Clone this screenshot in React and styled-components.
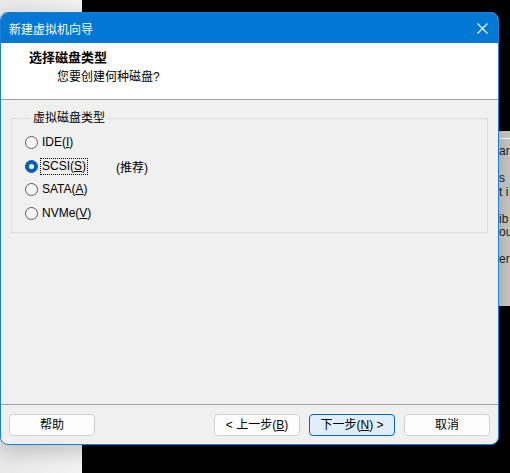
import React from 'react';
import styled, { createGlobalStyle } from 'styled-components';

const GlobalStyle = createGlobalStyle`
  html, body {
    margin: 0;
    padding: 0;
  }
  body {
    font-family: "Liberation Sans", "Noto Sans CJK SC", sans-serif;
    font-size: 12px;
    color: #000;
  }
`;

const cjk = `"Liberation Sans", "Noto Sans CJK SC", sans-serif`;

const Desktop = styled.div`
  position: relative;
  width: 510px;
  height: 473px;
  overflow: hidden;
  box-sizing: border-box;
  padding-top: 12px;
  background: linear-gradient(90deg, #e9e9e9 0, #f4f4f4 82px, #000 82px);
`;

// a bit of another window peeking out from behind the wizard
const BackWindow = styled.div`
  position: absolute;
  left: 499px;
  top: 131px;
  width: 20px;
  height: 175px;
  background: #c9c9c9;
  overflow: hidden;
`;

const BackTitle = styled.div`
  height: 7px;
  border-bottom: 1px solid #fff;
`;

const BackText = styled.pre`
  margin: 0;
  padding-top: 6px;
  font-family: "Liberation Sans", sans-serif;
  font-size: 12px;
  line-height: 13.5px;
  color: #1e1e1e;
  white-space: pre;
`;

const Window = styled.div`
  position: relative;
  width: 499px;
  height: 433px;
  box-sizing: border-box;
  border: 1px solid #1a7fd6;
  border-radius: 8px;
  overflow: hidden;
  display: flex;
  flex-direction: column;
  background: #f0f0f0;
  box-shadow: 0 6px 22px rgba(0, 0, 0, 0.22);
`;

const TitleBar = styled.div`
  height: 30px;
  flex-shrink: 0;
  display: flex;
  align-items: center;
  justify-content: space-between;
  padding: 0 10px 0 8px;
  background: #0078d4;
  color: #fff;
  font-family: ${cjk};
  font-size: 12px;
`;

const CloseButton = styled.span`
  display: flex;
  width: 11px;
  height: 11px;
`;

const Header = styled.div`
  flex-shrink: 0;
  background: #fff;
  border-bottom: 1px solid #a0a0a0;
  padding: 7px 0 0 28px;
  height: 49px;
  font-family: ${cjk};
`;

const Heading = styled.div`
  font-size: 13px;
  font-weight: 700;
  line-height: 16px;
`;

const SubHeading = styled.div`
  margin: 3px 0 0 28px;
  font-size: 12px;
  line-height: 16px;
`;

const Body = styled.div`
  flex: 1;
  padding: 10px 10px 0;
`;

const Group = styled.fieldset`
  margin: 0;
  padding: 5px 13px 7px;
  border: 1px solid #dcdcdc;
  min-inline-size: 0;
`;

const Legend = styled.legend`
  margin-left: 6px;
  padding: 0 2px;
  font-family: ${cjk};
  font-size: 12px;
  line-height: 16px;
`;

const Option = styled.label`
  display: flex;
  align-items: center;
  height: 23.6px;
  font-size: 12px;
`;

const RadioDot = styled.span`
  width: 13px;
  height: 13px;
  box-sizing: border-box;
  border-radius: 50%;
  margin-right: 3px;
  flex-shrink: 0;
  border: 1px solid ${(p) => (p.$checked ? '#005fb8' : '#5c5c5c')};
  background: ${(p) => (p.$checked ? '#005fb8' : '#f7f7f7')};
  display: flex;
  align-items: center;
  justify-content: center;

  &::after {
    content: '';
    display: ${(p) => (p.$checked ? 'block' : 'none')};
    width: 5px;
    height: 5px;
    border-radius: 50%;
    background: #fff;
  }
`;

const OptionText = styled.span`
  padding: 0 1px;
  line-height: 15px;
  outline: ${(p) => (p.$focused ? '1px dotted #000' : 'none')};
`;

const Hint = styled.span`
  margin-left: 29px;
  font-family: ${cjk};
`;

const Footer = styled.div`
  flex-shrink: 0;
  display: flex;
  align-items: center;
  gap: 9px;
  padding: 9px 8px 8px;
  border-top: 1px solid #a0a0a0;
`;

const Spacer = styled.div`
  flex: 1;
`;

const Button = styled.button`
  width: 86px;
  height: 22px;
  padding: 0;
  border-radius: 4px;
  border: 1px solid ${(p) => (p.$primary ? '#0067c0' : '#d0d0d0')};
  background: ${(p) => (p.$primary ? '#e0eef9' : '#fdfdfd')};
  font-family: ${cjk};
  font-size: 12px;
  color: #000;
  line-height: 20px;
`;

const options = [
  { label: 'IDE', key: 'I' },
  { label: 'SCSI', key: 'S', checked: true, hint: '(推荐)' },
  { label: 'SATA', key: 'A' },
  { label: 'NVMe', key: 'V' },
];

export default function App() {
  return (
    <>
      <GlobalStyle />
      <Desktop>
        <BackWindow>
          <BackTitle />
          <BackText>{'are\n\ns\nt i\n\nib\nou\n\ner'}</BackText>
        </BackWindow>

        <Window>
          <TitleBar>
            <span>新建虚拟机向导</span>
            <CloseButton>
              <svg width="11" height="11" viewBox="0 0 11 11">
                <path d="M0.5 0.5 L10.5 10.5 M10.5 0.5 L0.5 10.5" stroke="#fff" strokeWidth="1.1" fill="none" />
              </svg>
            </CloseButton>
          </TitleBar>

          <Header>
            <Heading>选择磁盘类型</Heading>
            <SubHeading>您要创建何种磁盘?</SubHeading>
          </Header>

          <Body>
            <Group>
              <Legend>虚拟磁盘类型</Legend>
              {options.map((o) => (
                <Option key={o.label}>
                  <RadioDot $checked={o.checked} />
                  <OptionText $focused={o.checked}>
                    {o.label}(<u>{o.key}</u>)
                  </OptionText>
                  {o.hint && <Hint>{o.hint}</Hint>}
                </Option>
              ))}
            </Group>
          </Body>

          <Footer>
            <Button>帮助</Button>
            <Spacer />
            <Button>&lt; 上一步(<u>B</u>)</Button>
            <Button $primary>下一步(<u>N</u>) &gt;</Button>
            <Button>取消</Button>
          </Footer>
        </Window>
      </Desktop>
    </>
  );
}
